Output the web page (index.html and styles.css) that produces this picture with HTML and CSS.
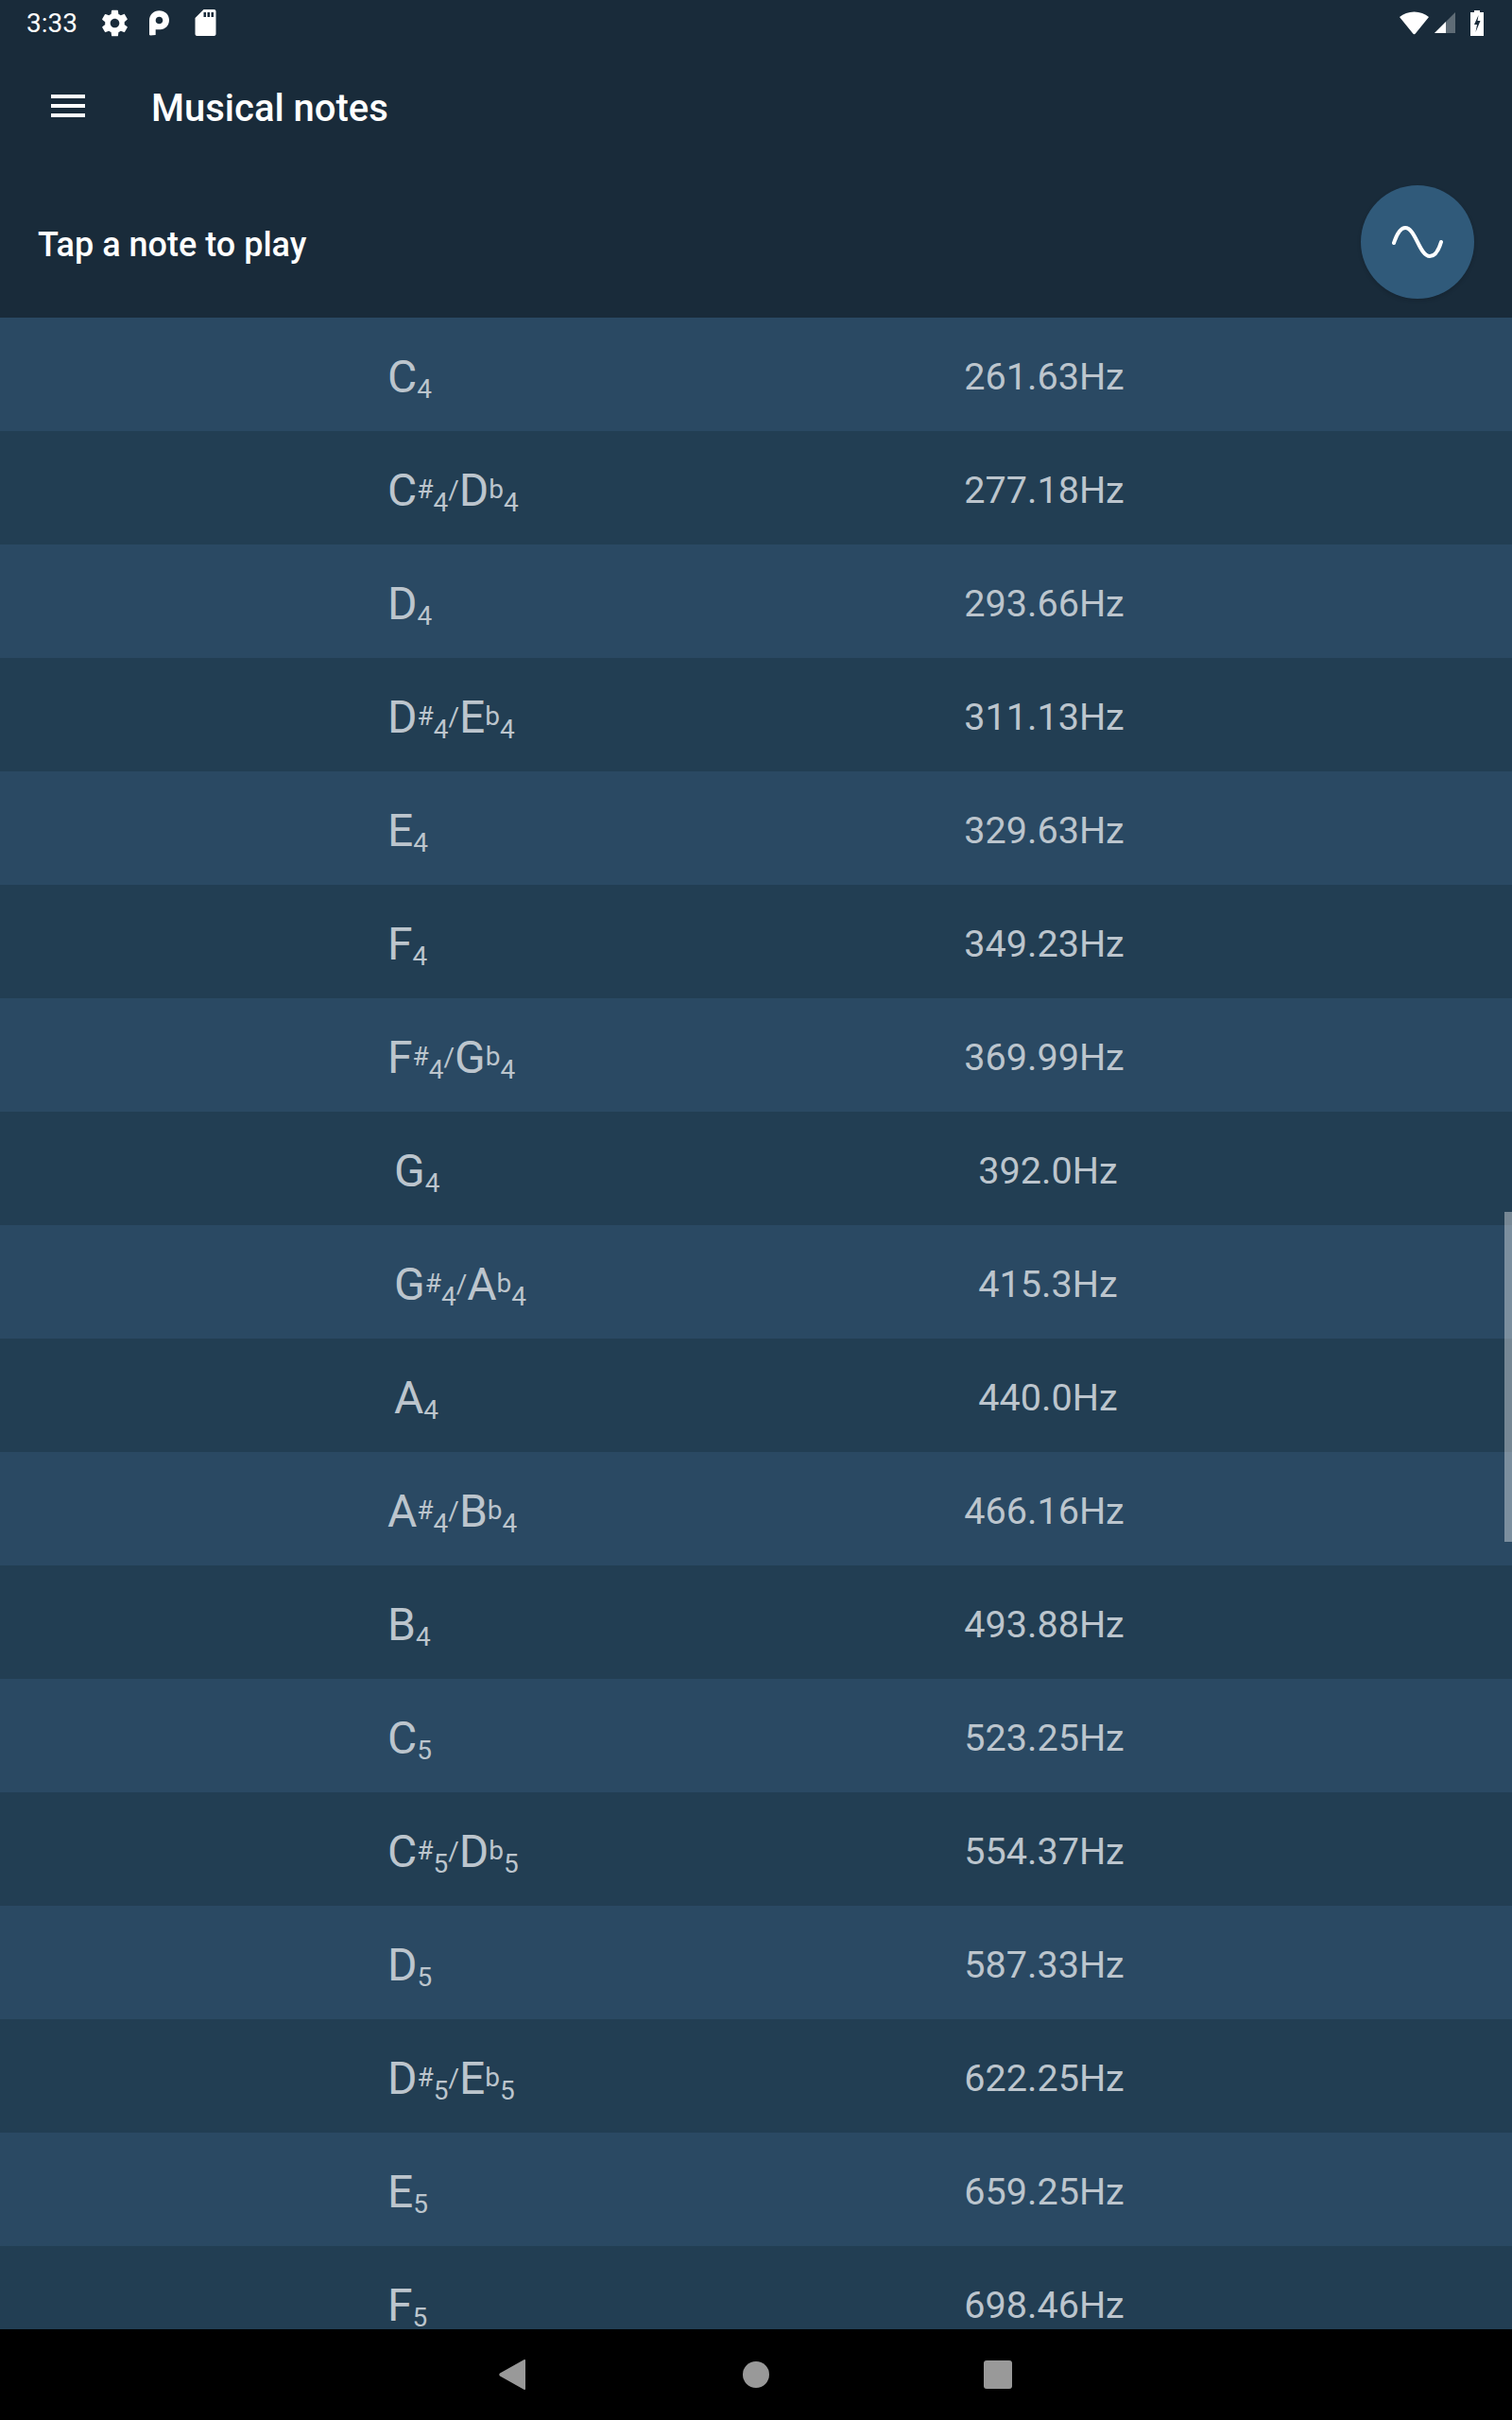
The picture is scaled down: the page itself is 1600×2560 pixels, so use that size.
FILE: index.html
```html
<!DOCTYPE html>
<html lang="en">
<head>
<meta charset="utf-8">
<title>Musical notes</title>
<link rel="stylesheet" href="styles.css">
</head>
<body>
<div class="app">
  <header class="header">
    <div class="status">
      <div class="status-left">
        <span class="time">3:33</span>
        <svg class="ic-gear" viewBox="0 0 24 24"><path fill="#fff" d="M19.4 13c.04-.33.07-.66.07-1s-.03-.67-.07-1l2.1-1.65c.19-.15.24-.42.12-.64l-2-3.46c-.12-.22-.39-.3-.61-.22l-2.49 1c-.52-.4-1.08-.73-1.69-.98l-.38-2.65A.49.49 0 0 0 14 2h-4c-.25 0-.46.18-.49.42l-.38 2.65c-.61.25-1.17.59-1.69.98l-2.49-1a.5.5 0 0 0-.61.22l-2 3.46c-.13.22-.07.49.12.64L4.57 11c-.04.33-.07.67-.07 1s.03.67.07 1l-2.11 1.65c-.19.15-.24.42-.12.64l2 3.46c.12.22.39.3.61.22l2.49-1c.52.4 1.08.73 1.69.98l.38 2.65c.03.24.24.42.49.42h4c.25 0 .46-.18.49-.42l.38-2.65c.61-.25 1.17-.59 1.69-.98l2.49 1c.23.09.49 0 .61-.22l2-3.46c.12-.22.07-.49-.12-.64L19.4 13zM12 15.5c-1.93 0-3.5-1.57-3.5-3.5s1.57-3.5 3.5-3.5 3.5 1.57 3.5 3.5-1.57 3.5-3.5 3.5z"/></svg>
        <svg class="ic-p" viewBox="0 0 22 28"><path fill="#fff" fill-rule="evenodd" d="M0 11C0 4.500 4.600 0 11 0s11 4.500 11 10.500S17.500 21 12 21H7v6.200L1 27.500 0 26.800V11zM7 11c0 2.200 1.800 3.800 4 3.800s4-1.700 4-3.900-1.800-3.900-4-3.900-4 1.800-4 4z"/></svg>
        <svg class="ic-sd" viewBox="0 0 22 28"><path fill="#fff" fill-rule="evenodd" d="M9 0h11c1.100 0 2 .9 2 2v24c0 1.100-.9 2-2 2H2c-1.100 0-2-.9-2-2V9L9 0zM9 3v5h2.500V3H9zM13 3v5h2.500V3H13zM17 3v5h2.500V3H17z"/></svg>
      </div>
      <div class="status-right">
        <svg class="ic-wifi" viewBox="0 0 31 24"><path fill="#fff" d="M17 22.800 31 5.500C27 2.200 21.500 0 15.500 0S4 2.200 0 5.500L14 22.800c.8 1.200 2.200 1.200 3 0z"/></svg>
        <svg class="ic-signal" viewBox="0 0 22 22"><path fill="#5f6c76" d="M22 0v22H0z"/><path fill="#fff" d="M12 10v12H0z"/></svg>
        <svg class="ic-batt" viewBox="0 0 14 27"><path fill="#fff" fill-rule="evenodd" d="M4 0h6v2h4v25H0V2h4V0zM8.500 5 4 15h3l-1.500 8 5-12H7.500l1-6z"/></svg>
      </div>
    </div>
    <div class="toolbar">
      <svg class="ic-menu" viewBox="0 0 36 24"><path fill="#fff" d="M0 0h36v4H0zM0 10h36v4H0zM0 20h36v4H0z"/></svg>
      <h1 class="title">Musical notes</h1>
    </div>
    <div class="hint-row">
      <span class="hint">Tap a note to play</span>
      <button class="fab" type="button" aria-label="Waveform">
        <svg class="ic-wave" viewBox="0 0 56 36"><path fill="none" stroke="#fff" stroke-width="4" stroke-linecap="round" d="M3 19C6 10 10 3 15 3c11 0 15 30 26 30 5 0 9-5 12-15"/></svg>
      </button>
    </div>
  </header>
  <main class="list">
    <div class="row"><span class="note">C<sub>4</sub></span><span class="freq">261.63Hz</span></div>
    <div class="row"><span class="note">C<sup>#</sup><sub>4</sub><i>/</i>D<sup>b</sup><sub>4</sub></span><span class="freq">277.18Hz</span></div>
    <div class="row"><span class="note">D<sub>4</sub></span><span class="freq">293.66Hz</span></div>
    <div class="row"><span class="note">D<sup>#</sup><sub>4</sub><i>/</i>E<sup>b</sup><sub>4</sub></span><span class="freq">311.13Hz</span></div>
    <div class="row"><span class="note">E<sub>4</sub></span><span class="freq">329.63Hz</span></div>
    <div class="row"><span class="note">F<sub>4</sub></span><span class="freq">349.23Hz</span></div>
    <div class="row"><span class="note">F<sup>#</sup><sub>4</sub><i>/</i>G<sup>b</sup><sub>4</sub></span><span class="freq">369.99Hz</span></div>
    <div class="row short"><span class="note">G<sub>4</sub></span><span class="freq">392.0Hz</span></div>
    <div class="row short"><span class="note">G<sup>#</sup><sub>4</sub><i>/</i>A<sup>b</sup><sub>4</sub></span><span class="freq">415.3Hz</span></div>
    <div class="row short"><span class="note">A<sub>4</sub></span><span class="freq">440.0Hz</span></div>
    <div class="row"><span class="note">A<sup>#</sup><sub>4</sub><i>/</i>B<sup>b</sup><sub>4</sub></span><span class="freq">466.16Hz</span></div>
    <div class="row"><span class="note">B<sub>4</sub></span><span class="freq">493.88Hz</span></div>
    <div class="row"><span class="note">C<sub>5</sub></span><span class="freq">523.25Hz</span></div>
    <div class="row"><span class="note">C<sup>#</sup><sub>5</sub><i>/</i>D<sup>b</sup><sub>5</sub></span><span class="freq">554.37Hz</span></div>
    <div class="row"><span class="note">D<sub>5</sub></span><span class="freq">587.33Hz</span></div>
    <div class="row"><span class="note">D<sup>#</sup><sub>5</sub><i>/</i>E<sup>b</sup><sub>5</sub></span><span class="freq">622.25Hz</span></div>
    <div class="row"><span class="note">E<sub>5</sub></span><span class="freq">659.25Hz</span></div>
    <div class="row"><span class="note">F<sub>5</sub></span><span class="freq">698.46Hz</span></div>
    <div class="scrollbar"></div>
  </main>
  <nav class="nav">
    <svg class="ic-back" viewBox="0 0 28 32"><path fill="#999" d="M27 0c.6 0 1 .4 1 1v30c0 .6-.4 1-1 1-.2 0-.4-.1-.6-.2L1 17.500c-1-.7-1-2.300 0-3L26.400.2c.2-.1.4-.2.6-.2z"/></svg>
    <span class="ic-home"></span>
    <span class="ic-recent"></span>
  </nav>
</div>
</body>
</html>
```
FILE: styles.css
```css
* { box-sizing: border-box; }
html, body { margin: 0; padding: 0; }
body { background: #192b3a; font-family: Roboto, "Liberation Sans", sans-serif; }
.app { width: 1600px; height: 2560px; display: flex; flex-direction: column; overflow: hidden; }

.header { height: 336px; background: #192b3a; color: #fff; flex: none; }
.status { height: 48px; display: flex; justify-content: space-between; align-items: center; padding: 0 30px 0 28px; }
.status-left, .status-right { display: flex; align-items: center; }
.time { font-size: 28px; width: 54px; }
.ic-gear { width: 33px; height: 33px; margin-left: 23px; }
.ic-p { width: 21px; height: 27px; margin-left: 20px; }
.ic-sd { width: 23px; height: 28px; margin-left: 27px; }
.ic-wifi { width: 31px; height: 25px; }
.ic-signal { width: 22px; height: 22px; margin-left: 6px; }
.ic-batt { width: 14px; height: 27px; margin-left: 16px; }

.toolbar { height: 128px; display: flex; align-items: center; padding-left: 54px; }
.ic-menu { width: 36px; height: 24px; }
.title { margin: 0 0 0 70px; padding-top: 6px; font-size: 40px; font-weight: 500; line-height: 48px; }

.hint-row { height: 160px; display: flex; justify-content: space-between; align-items: center; padding: 0 40px; }
.hint { font-size: 36px; font-weight: 500; padding-top: 5px; }
.fab { width: 120px; height: 120px; border: 0; padding: 0; border-radius: 50%; background: #305a7a; display: flex; align-items: center; justify-content: center; box-shadow: 0 2px 4px rgba(0,0,0,.15); }
.ic-wave { width: 56px; height: 36px; }

.list { position: relative; flex: 1; overflow: hidden; min-height: 0; }
.row { height: 120px; display: flex; align-items: center; padding-left: 410px; color: #bcc5cd; background: #223e53; }
.row:nth-child(odd) { background: #2a4963; }
.note { width: 610px; font-size: 48px; white-space: nowrap; line-height: 1; padding-top: 6px; }
.note sub { font-size: 28px; vertical-align: -6px; line-height: 0; }
.note sup { font-size: 28px; vertical-align: 8px; line-height: 0; }
.note i { font-style: normal; font-size: 28px; vertical-align: 7px; line-height: 0; }
.freq { width: 170px; text-align: center; white-space: nowrap; font-size: 39.6px; padding-top: 5px; }
.short { padding-left: 417px; }
.short .note { width: 607px; }
.scrollbar { position: absolute; right: 0; top: 946px; width: 8px; height: 349px; background: rgba(255,255,255,.38); }

.nav { height: 96px; flex: none; background: #000; display: flex; align-items: center; padding-left: 528px; }
.ic-back { width: 28px; height: 32px; }
.ic-home { width: 28px; height: 28px; margin-left: 230px; border-radius: 50%; background: #999; }
.ic-recent { width: 30px; height: 30px; margin-left: 227px; border-radius: 3px; background: #999; }
```
